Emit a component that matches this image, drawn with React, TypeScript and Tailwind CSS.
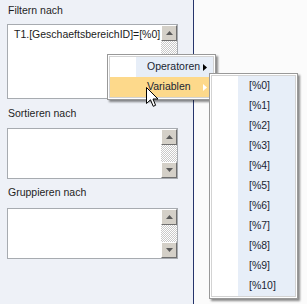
import React from 'react'

const font = { fontFamily: '"Liberation Sans", Arial, sans-serif' }

function Arrow({ down }: { down?: boolean }) {
  return (
    <svg width="7" height="4" viewBox="0 0 7 4" className={down ? 'rotate-180' : ''}>
      <path d="M3.5 0 L7 4 L0 4 Z" fill="#5a5a5a" />
    </svg>
  )
}

function ScrollBtn({ down }: { down?: boolean }) {
  return (
    <div className="h-[16px] w-[16px] flex items-center justify-center bg-[#d4d0c8] border-t border-l border-t-white border-l-white border-b border-r border-b-[#6f6f6f] border-r-[#6f6f6f]">
      <Arrow down={down} />
    </div>
  )
}

function ListBox({ h, children }: { h: string; children?: React.ReactNode }) {
  return (
    <div className={`${h} w-[171px] border border-[#a7abb0] bg-white flex`}>
      <div className="flex-1 pl-[6px] pt-[2px] text-[10.5px] leading-[14px] text-[#1b1b1b] whitespace-nowrap overflow-hidden">
        {children}
      </div>
      <div className="w-[16px] flex flex-col">
        <ScrollBtn />
        <div className="flex-1 bg-[repeating-conic-gradient(#c9c9c9_0%_25%,#ffffff_0%_50%)] bg-[length:2px_2px]" />
        <ScrollBtn down />
      </div>
    </div>
  )
}

function MenuItem({ label, hot, sub, white }: { label: string; hot?: boolean; sub?: boolean; white?: boolean }) {
  return (
    <div className={`h-[20px] flex items-center ${hot ? 'bg-[#fdd98b]' : ''}`}>
      <div className={`w-[26px] h-full ${hot ? '' : 'bg-white'}`} />
      <div className={`flex-1 h-full flex items-center pl-[11px] pr-[6px] ${hot ? '' : 'bg-[#e7eef8]'}`}>
        <span className="flex-1 text-[10.5px] text-[#1a1f33]">{label}</span>
        {sub && (
          <svg width="4" height="7" viewBox="0 0 4 7">
            <path d="M0 0 L4 3.5 L0 7 Z" fill={white ? '#ffffff' : '#000000'} />
          </svg>
        )}
      </div>
    </div>
  )
}

export default function App() {
  const vars = ['[%0]', '[%1]', '[%2]', '[%3]', '[%4]', '[%5]', '[%6]', '[%7]', '[%8]', '[%9]', '[%10]']
  return (
    <div className="relative w-[307px] h-[304px] flex overflow-hidden bg-[#fbfbfb]" style={font}>
      <div className="w-[194px] h-full bg-[#eef1f7] border-r border-[#26356b] pl-[7px] pt-[3px]">
        <div className="pl-[1px] h-[14px] leading-[14px] text-[10.5px] text-[#1e1e1e]">Filtern nach</div>
        <div className="mt-[7px]">
          <ListBox h="h-[75px]">T1.[GeschaeftsbereichID]=[%0]</ListBox>
        </div>
        <div className="mt-[7px] pl-[1px] h-[14px] leading-[14px] text-[10.5px] text-[#1e1e1e]">Sortieren nach</div>
        <div className="mt-[8px]">
          <ListBox h="h-[51px]" />
        </div>
        <div className="mt-[6px] pl-[1px] h-[14px] leading-[14px] text-[10.5px] text-[#1e1e1e]">Gruppieren nach</div>
        <div className="mt-[9px]">
          <ListBox h="h-[51px]" />
        </div>
      </div>

      {/* context menu */}
      <div className="absolute left-[107px] top-[54px] w-[109px] border border-[#999999] bg-white p-[1px] shadow-[2px_2px_2px_rgba(0,0,0,0.45)]">
        <div className="border border-[#d3d3d3]">
          <MenuItem label="Operatoren" sub />
          <MenuItem label="Variablen" sub hot white />
        </div>
      </div>

      {/* submenu */}
      <div className="absolute left-[209px] top-[73px] w-[89px] border border-[#999999] bg-white p-[1px] shadow-[2px_2px_2px_rgba(0,0,0,0.45)]">
        <div className="border border-[#d3d3d3]">
          {vars.map(v => (
            <MenuItem key={v} label={v} />
          ))}
        </div>
      </div>

      {/* mouse pointer */}
      <svg className="absolute left-[146px] top-[87px]" width="13" height="21" viewBox="0 0 13 21">
        <path d="M0.5 0.5 L0.5 16.5 L4.5 12.8 L7.2 19.3 L9.6 18.3 L7 12 L12 12 Z" fill="#ffffff" stroke="#000000" strokeWidth="1" strokeLinejoin="miter" />
      </svg>
    </div>
  )
}
